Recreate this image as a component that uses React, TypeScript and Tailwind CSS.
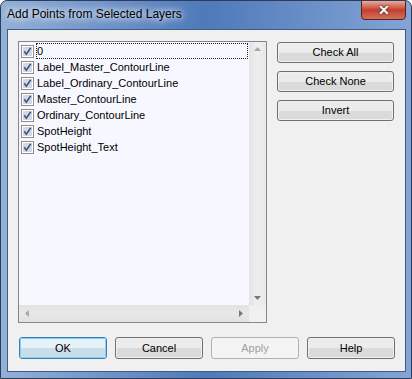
const LAYERS = [
  "0",
  "Label_Master_ContourLine",
  "Label_Ordinary_ContourLine",
  "Master_ContourLine",
  "Ordinary_ContourLine",
  "SpotHeight",
  "SpotHeight_Text",
]

const SIDE_BUTTONS = ["Check All", "Check None", "Invert"]

function CheckBox() {
  return (
    <svg width="13" height="13" viewBox="0 0 13 13" className="shrink-0">
      <rect x="0.5" y="0.5" width="12" height="12" fill="#ffffff" stroke="#8e8f8f" />
      <rect x="2" y="2" width="9" height="9" fill="#d6d8dc" />
      <path d="M3.2 6.2 L5.3 9.2 L9.8 2.8" fill="none" stroke="#3a4f9a" strokeWidth="1.6" />
    </svg>
  )
}

function WinButton({ label, primary, disabled }: { label: string; primary?: boolean; disabled?: boolean }) {
  return (
    <div
      className={`relative h-full w-full rounded-[3px] border overflow-hidden ${
        disabled
          ? "border-[#adb2b5] bg-[#f4f4f4] text-[#a0a0a0]"
          : primary
            ? "border-[#3c7fb1] text-black"
            : "border-[#707070] text-black"
      }`}
    >
      {!disabled && (
        <div className={`absolute inset-[1px] flex flex-col ${primary ? "outline outline-1 outline-[#7fd2f5]" : ""}`}>
          <div className={`flex-1 ${primary ? "bg-[#e6f2f9]" : "bg-[#ececec]"}`} />
          <div className={`flex-1 ${primary ? "bg-[#c9dde9]" : "bg-[#dadada]"}`} />
        </div>
      )}
      <span className="relative flex h-full items-center justify-center">{label}</span>
    </div>
  )
}

export default function App() {
  return (
    <div
      className="w-[412px] h-[379px] flex flex-col rounded-t-[7px] border border-[#2c3d57] bg-gradient-to-r from-[#93b0d8] via-[#4f79ba] to-[#84a5d5] text-[11px] text-black overflow-hidden"
      style={{ fontFamily: '"Liberation Sans", Arial, sans-serif' }}
    >
      {/* title bar */}
      <div className="relative h-[28px] shrink-0 flex items-center">
        <span className="ml-[6px] mb-[2px] text-[12px] text-black [text-shadow:0_0_6px_#fff,0_0_10px_#fff]">
          Add Points from Selected Layers
        </span>
        <div className="absolute right-[5px] top-[-1px] w-[45px] h-[20px] rounded-b-[4px] border border-[#5a1f17] bg-gradient-to-b from-[#e9a99c] via-[#c43d2e] to-[#d2705c] flex items-center justify-center">
          <span className="text-white font-bold text-[14px] leading-none [text-shadow:0_0_2px_#222,0_0_1px_#222]">✕</span>
        </div>
      </div>

      {/* client area */}
      <div className="ml-[6px] mr-[5px] h-[343px] border border-[#3f5c86] bg-[#f0f0f0] pt-[11px] pl-[10px]">
        <div className="flex">
          {/* list box */}
          <div className="w-[249px] h-[282px] border border-[#828790] bg-[#f7f8ff] flex flex-col">
            <div className="flex flex-1">
              <div className="flex-1 pt-[1px]">
                {LAYERS.map((name, i) => (
                  <div key={name} className="h-[16px] flex items-center pl-[2px]">
                    <CheckBox />
                    <span
                      className={`ml-[2px] h-[16px] flex items-center pl-[1px] ${
                        i === 0 ? "flex-1 mr-[1px] outline-1 outline-dotted outline-[#222] -outline-offset-1" : ""
                      }`}
                    >
                      {name}
                    </span>
                  </div>
                ))}
              </div>
              {/* vertical scrollbar */}
              <div className="w-[17px] bg-gradient-to-r from-[#e3e3e3] via-[#efefef] to-[#e8e8e8] flex flex-col justify-between items-center py-[5px]">
                <svg width="7" height="4" viewBox="0 0 7 4">
                  <path d="M0 4 L3.5 0 L7 4 Z" fill="#a8a8a8" />
                </svg>
                <svg width="7" height="4" viewBox="0 0 7 4">
                  <path d="M0 0 L3.5 4 L7 0 Z" fill="#6f7b7b" />
                </svg>
              </div>
            </div>
            <div className="h-[17px] flex">
              <div className="flex-1 bg-gradient-to-b from-[#e3e3e3] via-[#e8e8e8] to-[#e2e2e2] flex items-center justify-between px-[6px]">
                <svg width="4" height="7" viewBox="0 0 4 7">
                  <path d="M4 0 L0 3.5 L4 7 Z" fill="#a8a8a8" />
                </svg>
                <svg width="4" height="7" viewBox="0 0 4 7">
                  <path d="M0 0 L4 3.5 L0 7 Z" fill="#6f7b7b" />
                </svg>
              </div>
              <div className="w-[17px] bg-[#f0f0f0]" />
            </div>
          </div>

          {/* side buttons */}
          <div className="ml-[10px] mt-[1px] w-[117px] flex flex-col gap-[8px]">
            {SIDE_BUTTONS.map((b) => (
              <div key={b} className="h-[21px]">
                <WinButton label={b} />
              </div>
            ))}
          </div>
        </div>

        {/* bottom buttons */}
        <div className="mt-[14px] ml-[1px] flex gap-[8px]">
          <div className="w-[88px] h-[22px]">
            <WinButton label="OK" primary />
          </div>
          <div className="w-[88px] h-[22px]">
            <WinButton label="Cancel" />
          </div>
          <div className="w-[88px] h-[22px]">
            <WinButton label="Apply" disabled />
          </div>
          <div className="w-[88px] h-[22px]">
            <WinButton label="Help" />
          </div>
        </div>
      </div>
    </div>
  )
}
